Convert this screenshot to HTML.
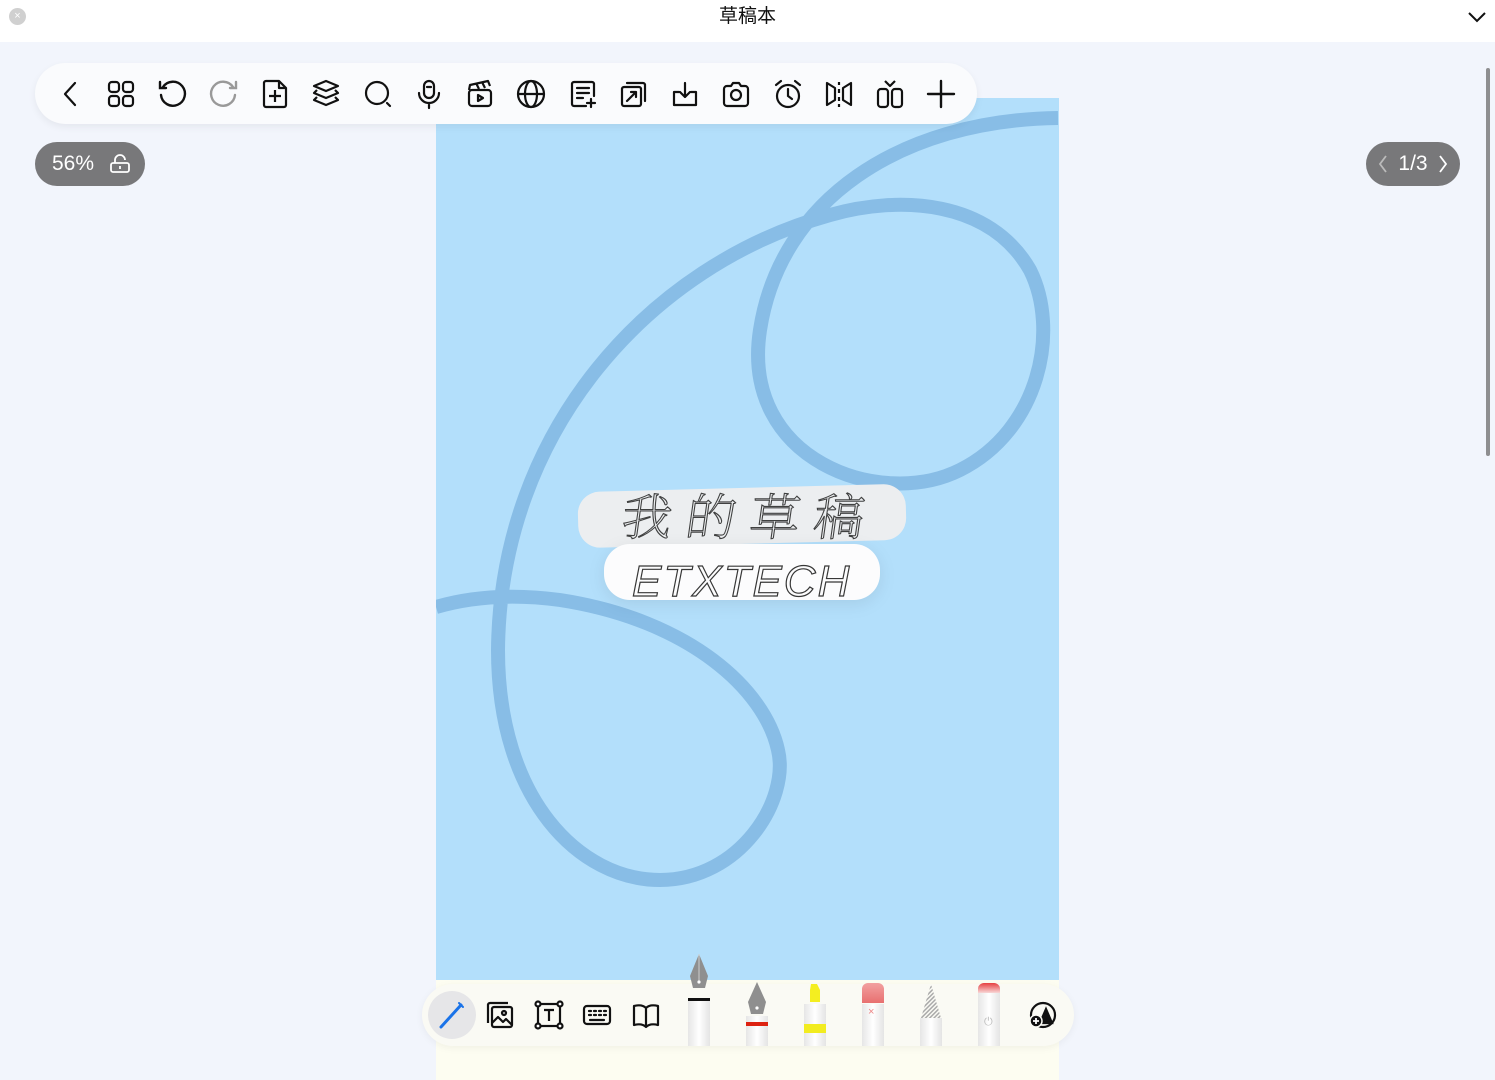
<!DOCTYPE html>
<html><head><meta charset="utf-8">
<style>
*{margin:0;padding:0;box-sizing:border-box}
body{width:1495px;height:1080px;overflow:hidden;background:#f2f5fc;font-family:"Liberation Sans","Noto Sans CJK SC",sans-serif;position:relative}
.title{position:absolute;left:0;top:0;width:1495px;height:42px;background:#fff;text-align:center;font-size:19px;line-height:34px;color:#111}
.close{position:absolute;left:9px;top:8px;width:17px;height:17px;border-radius:50%;background:#d0d0d0;color:#fff;font-size:11px;line-height:17px;text-align:center}
.tb{position:absolute;left:35px;top:63px;width:942px;height:61px;background:#fafbfd;border-radius:31px;box-shadow:0 3px 8px rgba(0,0,0,.06);z-index:3}
.tb svg{position:absolute;top:15px;width:32px;height:32px}
.pill{position:absolute;top:142px;height:44px;background:#78787a;border-radius:22px;color:#fff;font-size:21px;line-height:44px}
.canvas{position:absolute;left:436px;top:98px;width:623px;height:882px;background:#b3dffb;overflow:hidden}
.ivory{position:absolute;left:436px;top:980px;width:623px;height:100px;background:#fdfdf1}
.bb{position:absolute;left:422px;top:984px;width:652px;height:62px;background:#fafaf4;border-radius:31px;box-shadow:0 2px 8px rgba(0,0,0,.05)}
.bb svg.i{position:absolute;top:15px;width:32px;height:32px}
.pen{position:absolute;width:22px;background:linear-gradient(90deg,#e6e6e6,#fff 50%,#e4e4e4);}
</style></head><body>
<div class="title"><div class="close">×</div>草稿本
<svg style="position:absolute;right:8px;top:10px" width="20" height="14" viewBox="0 0 20 14"><path d="M2 3l8 8 8-8" stroke="#111" stroke-width="2" fill="none"/></svg></div>

<div class="canvas">
<svg width="623" height="882" viewBox="436 98 623 882" style="position:absolute;left:0;top:0">
<path d="M1058,118 C900,120 780,200 760,330 C740,460 880,510 960,470 C1040,430 1060,330 1030,270 C990,200 900,195 830,215 C650,265 500,430 498,650 C498,800 580,880 660,880 C740,880 790,800 778,750 C765,690 690,620 560,600 C500,592 460,600 436,607" stroke="#88bde6" stroke-width="14" fill="none"/>
<g transform="rotate(-1.5 740 515)"><rect x="578" y="488" width="328" height="56" rx="22" fill="#eceef0"/></g>
<rect x="604" y="544" width="276" height="56" rx="26" fill="#fcfcfd" style="filter:drop-shadow(0 4px 8px rgba(0,0,0,.08))"/>
<text x="625" y="535" font-family="Liberation Serif,Noto Serif CJK SC,serif" font-size="50" font-weight="200" fill="none" stroke="#222" stroke-width="1.1" letter-spacing="14" transform="skewX(-8) translate(70,0)" opacity=".85">我的草稿</text>
<text x="632" y="596" font-family="Liberation Sans,sans-serif" font-size="44" font-style="italic" fill="none" stroke="#222" stroke-width="1.2" letter-spacing="2" opacity=".9">ETXTECH</text>
</svg>
</div>
<div class="ivory"></div>

<div class="tb">
<svg style="left:20px" viewBox="0 0 32 32" fill="none" stroke="#111" stroke-width="2.2" stroke-linecap="round" stroke-linejoin="round"><path d="M20 5L10 16l10 11"/></svg>
<svg style="left:70px" viewBox="0 0 32 32" fill="none" stroke="#111" stroke-width="2.2"><rect x="4" y="4" width="10" height="10" rx="3"/><rect x="18" y="4" width="10" height="10" rx="3"/><rect x="4" y="18" width="10" height="10" rx="3"/><rect x="18" y="18" width="10" height="10" rx="3"/></svg>
<svg style="left:121px" viewBox="0 0 32 32" fill="none" stroke="#111" stroke-width="2.4" stroke-linecap="round"><path d="M7 9A12 12 0 1 1 5 17"/><path d="M4 4v6h6"/></svg>
<svg style="left:173px" viewBox="0 0 32 32" fill="none" stroke="#999" stroke-width="2.4" stroke-linecap="round"><path d="M25 9A12 12 0 1 0 27 17"/><path d="M28 4v6h-6"/></svg>
<svg style="left:224px" viewBox="0 0 32 32" fill="none" stroke="#111" stroke-width="2.2" stroke-linejoin="round"><path d="M5 5a2 2 0 0 1 2-2h13l7 7v17a2 2 0 0 1-2 2H7a2 2 0 0 1-2-2z"/><path d="M20 3v7h7M16 12v12M10 18h12"/></svg>
<svg style="left:275px" viewBox="0 0 32 32" fill="none" stroke="#111" stroke-width="2.2" stroke-linejoin="round"><path d="M16 3l12 5-12 5-12-5z"/><path d="M7 12l-3 3 12 5 12-5-3-3"/><path d="M7 19l-3 3 12 5 12-5-3-3"/></svg>
<svg style="left:327px" viewBox="0 0 32 32" fill="none" stroke="#111" stroke-width="2.2" stroke-linecap="round"><circle cx="15" cy="15" r="11"/><path d="M25 25l3 3"/></svg>
<svg style="left:378px" viewBox="0 0 32 32" fill="none" stroke="#111" stroke-width="2.2" stroke-linecap="round"><rect x="11" y="3" width="10" height="17" rx="5"/><path d="M6 15a10 10 0 0 0 20 0M16 25v5M14 9h4"/></svg>
<svg style="left:429px" viewBox="0 0 32 32" fill="none" stroke="#111" stroke-width="2.2" stroke-linejoin="round"><rect x="5" y="12" width="22" height="16" rx="3"/><path d="M5 12l1-5 18-4 2 5M12 5l3 6M18 4l3 6"/><path d="M14 17v6l5-3z"/></svg>
<svg style="left:480px" viewBox="0 0 32 32" fill="none" stroke="#111" stroke-width="2.2"><circle cx="16" cy="16" r="13"/><ellipse cx="16" cy="16" rx="6" ry="13"/><path d="M3 16h26"/></svg>
<svg style="left:532px" viewBox="0 0 32 32" fill="none" stroke="#111" stroke-width="2.2" stroke-linecap="round"><path d="M19 28H7a2 2 0 0 1-2-2V6a2 2 0 0 1 2-2h18a2 2 0 0 1 2 2v12"/><path d="M10 10h12M10 15h12M10 20h6M24 21v8M20 25h8"/></svg>
<svg style="left:583px" viewBox="0 0 32 32" fill="none" stroke="#111" stroke-width="2.2" stroke-linecap="round" stroke-linejoin="round"><path d="M9 5h16a2 2 0 0 1 2 2v16"/><rect x="4" y="9" width="19" height="19" rx="2"/><path d="M9 23l9-9M18 14h-5M18 14v5"/></svg>
<svg style="left:634px" viewBox="0 0 32 32" fill="none" stroke="#111" stroke-width="2.2" stroke-linecap="round" stroke-linejoin="round"><path d="M10 14H5v13h22V14h-5M16 5v14M11 14l5 5 5-5"/></svg>
<svg style="left:685px" viewBox="0 0 32 32" fill="none" stroke="#111" stroke-width="2.2" stroke-linejoin="round"><path d="M4 11a3 3 0 0 1 3-3h4l2-3h6l2 3h4a3 3 0 0 1 3 3v14a3 3 0 0 1-3 3H7a3 3 0 0 1-3-3z"/><circle cx="16" cy="17" r="5"/></svg>
<svg style="left:737px" viewBox="0 0 32 32" fill="none" stroke="#111" stroke-width="2.2" stroke-linecap="round"><circle cx="16" cy="18" r="11"/><path d="M16 11v7l4 3M4 7l5-4M28 7l-5-4"/></svg>
<svg style="left:788px" viewBox="0 0 32 32" fill="none" stroke="#111" stroke-width="2.2" stroke-linejoin="round"><path d="M4 5v22l8-5V10z"/><path d="M28 5v22l-8-5V10z"/><path d="M16 4v3M16 11v4M16 19v4M16 26v3"/></svg>
<svg style="left:839px" viewBox="0 0 32 32" fill="none" stroke="#111" stroke-width="2.2" stroke-linejoin="round"><rect x="4" y="11" width="10" height="18" rx="3"/><rect x="18" y="11" width="10" height="18" rx="3"/><path d="M11 3l5 5 5-5"/></svg>
<svg style="left:890px" viewBox="0 0 32 32" fill="none" stroke="#111" stroke-width="2.4" stroke-linecap="round"><path d="M16 3v26M3 16h26"/></svg>
</div>

<div class="pill" style="left:35px;width:110px;padding-left:17px">56%
<svg style="position:absolute;left:74px;top:12px" width="22" height="20" viewBox="0 0 22 20" fill="none" stroke="#fff" stroke-width="1.8"><rect x="2" y="9" width="18" height="9" rx="2"/><path d="M6 9V6a5 5 0 0 1 10 0"/><path d="M11 12v3"/></svg></div>
<div class="pill" style="left:1366px;width:94px;text-align:center">
<svg style="position:absolute;left:12px;top:13px" width="10" height="18" viewBox="0 0 10 18"><path d="M8 1L2 9l6 8" stroke="#bbb" stroke-width="1.8" fill="none"/></svg>1/3
<svg style="position:absolute;right:12px;top:13px" width="10" height="18" viewBox="0 0 10 18"><path d="M2 1l6 8-6 8" stroke="#fff" stroke-width="1.8" fill="none"/></svg></div>
<div style="position:absolute;left:1486px;top:68px;width:4px;height:388px;border-radius:2px;background:#8e8e90"></div>

<div class="bb">
<div style="position:absolute;left:6px;top:7px;width:48px;height:48px;border-radius:50%;background:#e6e6e8"></div>
<svg class="i" style="left:14px" viewBox="0 0 32 32" fill="none" stroke="#1a73e8" stroke-width="3" stroke-linecap="round"><path d="M5 28L25 6"/><path d="M23 4l4 4" stroke-width="2"/></svg>
<svg class="i" style="left:62px" viewBox="0 0 32 32" fill="none" stroke="#111" stroke-width="2.2" stroke-linejoin="round"><path d="M4 24V6a2 2 0 0 1 2-2h18"/><rect x="8" y="8" width="20" height="20" rx="2"/><circle cx="20" cy="14" r="2"/><path d="M8 24l6-6 5 5 3-3 6 6"/></svg>
<svg class="i" style="left:111px" viewBox="0 0 32 32" fill="none" stroke="#111" stroke-width="2.2"><rect x="5" y="5" width="22" height="22"/><circle cx="5" cy="5" r="2.5" fill="#fff"/><circle cx="27" cy="5" r="2.5" fill="#fff"/><circle cx="5" cy="27" r="2.5" fill="#fff"/><circle cx="27" cy="27" r="2.5" fill="#fff"/><path d="M11 11h10M16 11v11"/></svg>
<svg class="i" style="left:159px" viewBox="0 0 32 32" fill="none" stroke="#111" stroke-width="2.2"><rect x="3" y="7" width="26" height="18" rx="3"/><path d="M8 12h2M13 12h2M18 12h2M23 12h2M8 16h2M13 16h2M18 16h2M23 16h2M9 21h14" stroke-linecap="round"/></svg>
<svg class="i" style="left:208px" viewBox="0 0 32 32" fill="none" stroke="#111" stroke-width="2.2" stroke-linejoin="round"><path d="M16 9c-3-3-8-3-12-2v19c4-1 9-1 12 2 3-3 8-3 12-2V7c-4-1-9-1-12 2zM16 9v19"/></svg>
<div class="pen" style="left:266px;top:16px;height:46px"></div>
<svg style="position:absolute;left:264px;top:-32px" width="26" height="50" viewBox="0 0 26 50"><path d="M13 2L4 24l3 12h12l3-12z" fill="#8f8f8f"/><path d="M13 2v28" stroke="#ccc" stroke-width="1"/><circle cx="13" cy="30" r="1.6" fill="#fff"/><rect x="2" y="46" width="22" height="3" fill="#111"/></svg>
<div class="pen" style="left:324px;top:32px;height:30px"></div>
<svg style="position:absolute;left:322px;top:-4px" width="26" height="50" viewBox="0 0 26 50"><path d="M13 2L4 22l3 12h12l3-12z" fill="#8f8f8f"/><circle cx="13" cy="28" r="1.6" fill="#fff"/><rect x="2" y="42" width="22" height="4" fill="#d21"/></svg>
<div class="pen" style="left:382px;top:20px;height:42px"></div>
<svg style="position:absolute;left:380px;top:-2px" width="26" height="60" viewBox="0 0 26 60"><path d="M9 2h6l3 6v12H8V8z" fill="#f4ee20"/><rect x="2" y="42" width="22" height="9" fill="#f2ec20"/></svg>
<div class="pen" style="left:440px;top:20px;height:42px"></div>
<div style="position:absolute;left:440px;top:-1px;width:22px;height:20px;border-radius:6px 6px 0 0;background:linear-gradient(#f2a0a0,#e87070)"></div>
<div style="position:absolute;left:446px;top:22px;color:#e88;font-size:11px">×</div>
<div class="pen" style="left:498px;top:34px;height:28px"></div>
<svg style="position:absolute;left:496px;top:-2px" width="26" height="38" viewBox="0 0 26 38"><defs><pattern id="h" width="3" height="3" patternUnits="userSpaceOnUse" patternTransform="rotate(45)"><rect width="1.5" height="3" fill="#aaa"/></pattern></defs><path d="M13 2L3 36h20z" fill="url(#h)"/></svg>
<div class="pen" style="left:556px;top:2px;height:60px"></div>
<div style="position:absolute;left:556px;top:-1px;width:22px;height:10px;border-radius:6px 6px 0 0;background:linear-gradient(#e64040,#f8d8d8)"></div>
<div style="position:absolute;left:562px;top:32px;color:#bbb;font-size:11px">⏻</div>
<svg class="i" style="left:604px" viewBox="0 0 32 32" fill="none" stroke="#111" stroke-width="2.2"><circle cx="17" cy="16" r="12"/><path d="M14 24l6-14 6 14z" fill="#111"/><circle cx="10" cy="22" r="6" fill="#111" stroke="#fafaf4" stroke-width="1.5"/><path d="M10 19v6M7 22h6" stroke="#fff" stroke-width="1.8"/></svg>
</div>
</body></html>
